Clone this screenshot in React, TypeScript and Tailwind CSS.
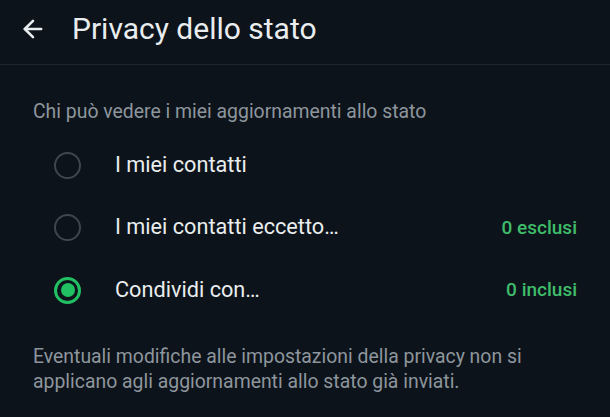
import { ArrowLeft } from 'lucide-react';

type Option = { label: string; note?: string; selected?: boolean };

const options: Option[] = [
  { label: 'I miei contatti' },
  { label: 'I miei contatti eccetto…', note: '0 esclusi' },
  { label: 'Condividi con…', note: '0 inclusi', selected: true },
];

function Radio({ selected }: { selected?: boolean }) {
  if (selected) {
    return (
      <span className="flex h-[27px] w-[27px] items-center justify-center rounded-full border-[3px] border-[#21c063]">
        <span className="h-[14px] w-[14px] rounded-full bg-[#21c063]" />
      </span>
    );
  }
  return <span className="block h-[27px] w-[27px] rounded-full border-[2.5px] border-[#3f474e]" />;
}

export default function App() {
  return (
    <div
      className="h-[417px] w-[610px] overflow-hidden bg-[#0d131a] text-[#e9edef]"
      style={{ fontFamily: 'Roboto, "Noto Sans", sans-serif' }}
    >
      <header className="flex h-[65px] items-center border-b border-[#1f262d] pb-[6px] pl-[19px]">
        <ArrowLeft className="h-[28px] w-[28px] text-[#e9edef]" strokeWidth={2.2} />
        <h1 className="ml-[25px] text-[30px] leading-none">Privacy dello stato</h1>
      </header>

      <section className="px-[33px] pt-[35px]">
        <p className="text-[19.4px] leading-[24px] text-[#8d969d]">Chi può vedere i miei aggiornamenti allo stato</p>
        <ul className="mt-[10px] flex flex-col">
          {options.map((o) => (
            <li key={o.label} className="flex h-[62.5px] items-center">
              <span className="ml-[21px] flex w-[61px] items-center">
                <Radio selected={o.selected} />
              </span>
              <span className="flex-1 text-[21.7px] text-[#e9edef]">{o.label}</span>
              {o.note && <span className="text-[19px] font-medium text-[#3fbc6a]">{o.note}</span>}
            </li>
          ))}
        </ul>
        <p className="mt-[22px] text-[19.4px] leading-[25px] text-[#8d969d]">
          Eventuali modifiche alle impostazioni della privacy non si applicano agli aggiornamenti allo stato già inviati.
        </p>
      </section>
    </div>
  );
}
